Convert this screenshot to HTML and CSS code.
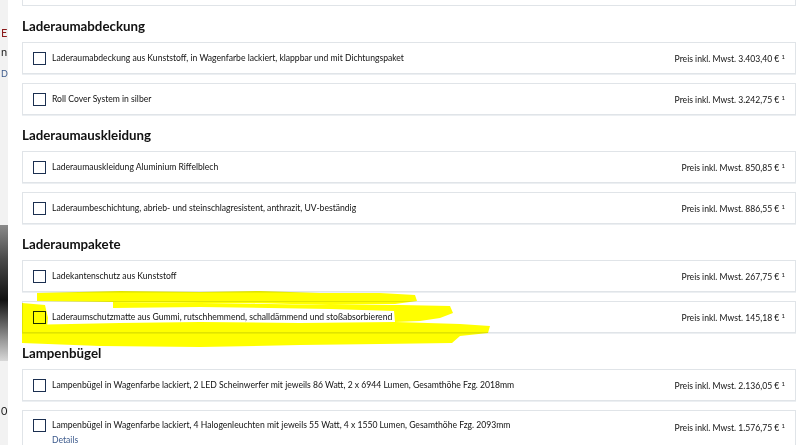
FILE: index.html
```html
<!DOCTYPE html>
<html lang="de">
<head>
    <meta charset="UTF-8">
    <meta name="viewport" content="width=device-width, initial-scale=1.0">
    <title>Zubehör – Laderaum</title>
    <link rel="stylesheet" href="styles.css">
</head>
<body>
    <div class="page">
        <!-- Hintergrundseite links -->
        <div class="side">
            <span class="side-e">E</span>
            <span class="side-n">n</span>
            <span class="side-d">D</span>
            <div class="side-photo"></div>
            <span class="side-o">0</span>
        </div>

        <div class="main">
            <div class="row-end"></div>

            <h2>Laderaumabdeckung</h2>
            <div class="row">
                <span class="check"></span>
                <span class="label">Laderaumabdeckung aus Kunststoff, in Wagenfarbe lackiert, klappbar und mit Dichtungspaket</span>
                <span class="price">Preis inkl. Mwst. 3.403,40 € <sup>1</sup></span>
            </div>
            <div class="row">
                <span class="check"></span>
                <span class="label">Roll Cover System in silber</span>
                <span class="price">Preis inkl. Mwst. 3.242,75 € <sup>1</sup></span>
            </div>

            <h2>Laderaumauskleidung</h2>
            <div class="row">
                <span class="check"></span>
                <span class="label">Laderaumauskleidung Aluminium Riffelblech</span>
                <span class="price">Preis inkl. Mwst. 850,85 € <sup>1</sup></span>
            </div>
            <div class="row">
                <span class="check"></span>
                <span class="label">Laderaumbeschichtung, abrieb- und steinschlagresistent, anthrazit, UV-beständig</span>
                <span class="price">Preis inkl. Mwst. 886,55 € <sup>1</sup></span>
            </div>

            <h2>Laderaumpakete</h2>
            <div class="row">
                <span class="check"></span>
                <span class="label">Ladekantenschutz aus Kunststoff</span>
                <span class="price">Preis inkl. Mwst. 267,75 € <sup>1</sup></span>
            </div>
            <div class="row">
                <span class="check"></span>
                <span class="label">Laderaumschutzmatte aus Gummi, rutschhemmend, schalldämmend und stoßabsorbierend</span>
                <span class="price">Preis inkl. Mwst. 145,18 € <sup>1</sup></span>
            </div>

            <h2>Lampenbügel</h2>
            <div class="row">
                <span class="check"></span>
                <span class="label">Lampenbügel in Wagenfarbe lackiert, 2 LED Scheinwerfer mit jeweils 86 Watt, 2 x 6944 Lumen, Gesamthöhe Fzg. 2018mm</span>
                <span class="price">Preis inkl. Mwst. 2.136,05 € <sup>1</sup></span>
            </div>
            <div class="row row-top">
                <span class="check"></span>
                <div class="label">
                    Lampenbügel in Wagenfarbe lackiert, 4 Halogenleuchten mit jeweils 55 Watt, 4 x 1550 Lumen, Gesamthöhe Fzg. 2093mm
                    <a class="details" href="#">Details</a>
                </div>
                <span class="price">Preis inkl. Mwst. 1.576,75 € <sup>1</sup></span>
            </div>
        </div>

        <!-- Textmarker -->
        <svg class="marker" width="800" height="445" viewBox="0 0 800 445">
            <polygon points="37,293 120,291 200,292 260,291 320,293 380,293 415,295 417,301 395,304 330,305 250,303 200,303 113,302 37,301"/>
            <polygon points="113,302 200,303 330,305 400,305 450,306 453,313 440,318 420,321 395,322 394,311 330,309 200,307 113,308"/>
            <polygon points="22,303 45,305 48,318 47,327 22,328"/>
            <polygon points="22,325 120,323 200,322 300,323 395,322 460,324 490,326 488,333 460,336 452,343 380,344 300,345 200,347 100,346 22,343"/>
        </svg>
    </div>
</body>
</html>
```

FILE: styles.css
```css
* {
    margin: 0;
    padding: 0;
    box-sizing: border-box;
}

body {
    font-family: Lato, 'Liberation Sans', sans-serif;
    background: #fff;
    color: #111;
    overflow: hidden;
}

.page {
    position: relative;
    display: flex;
    width: 800px;
    height: 445px;
    overflow: hidden;
}

/* Hintergrundseite */
.side {
    position: relative;
    width: 8px;
    flex-shrink: 0;
    background: #f2f2f2;
    overflow: hidden;
    font-size: 11px;
}

.side span {
    position: absolute;
    left: 1px;
}

.side-e { top: 26px; color: #8b1a1a; }
.side-n { top: 45px; color: #222; }
.side-d { top: 68px; color: #3c5a8c; font-size: 9px; }
.side-o { top: 404px; color: #222; }

.side-photo {
    position: absolute;
    top: 225px;
    left: 0;
    width: 8px;
    height: 136px;
    background: linear-gradient(180deg, #8a8a8a 0%, #4a4a4a 25%, #111 55%, #9a9a9a 85%, #d8d8d8 100%);
}

.main {
    flex: 1;
    padding: 0 4px 0 14px;
    box-shadow: -1px 0 2px rgba(0, 0, 0, 0.08);
}

h2 {
    font-size: 13.3px;
    font-weight: 700;
    line-height: 18px;
    margin: 11px 0 7px;
    color: #111;
}

.row-end {
    height: 6px;
    border: 1px solid #e0e4e8;
    border-top: none;
}

.row {
    display: flex;
    align-items: center;
    height: 32px;
    margin-bottom: 9px;
    padding: 0 10px;
    border: 1px solid #e0e4e8;
    box-shadow: 0 1px 0 #eceff2;
    font-size: 8.6px;
}

.row-top {
    align-items: flex-start;
    height: 44px;
    padding-top: 8px;
}

.check {
    width: 13px;
    height: 13px;
    border: 1px solid #1b2f50;
    flex-shrink: 0;
    margin-right: 6px;
}

.label {
    flex: 1;
    line-height: 13px;
}

.details {
    display: block;
    color: #3c5a8c;
    text-decoration: none;
    margin-top: 2px;
}

.price {
    white-space: nowrap;
    line-height: 13px;
}

.price sup {
    font-size: 6px;
    vertical-align: 3px;
}

/* Textmarker */
.marker {
    position: absolute;
    top: 0;
    left: 0;
    pointer-events: none;
    mix-blend-mode: multiply;
}

.marker polygon {
    fill: #ffff00;
}
```
